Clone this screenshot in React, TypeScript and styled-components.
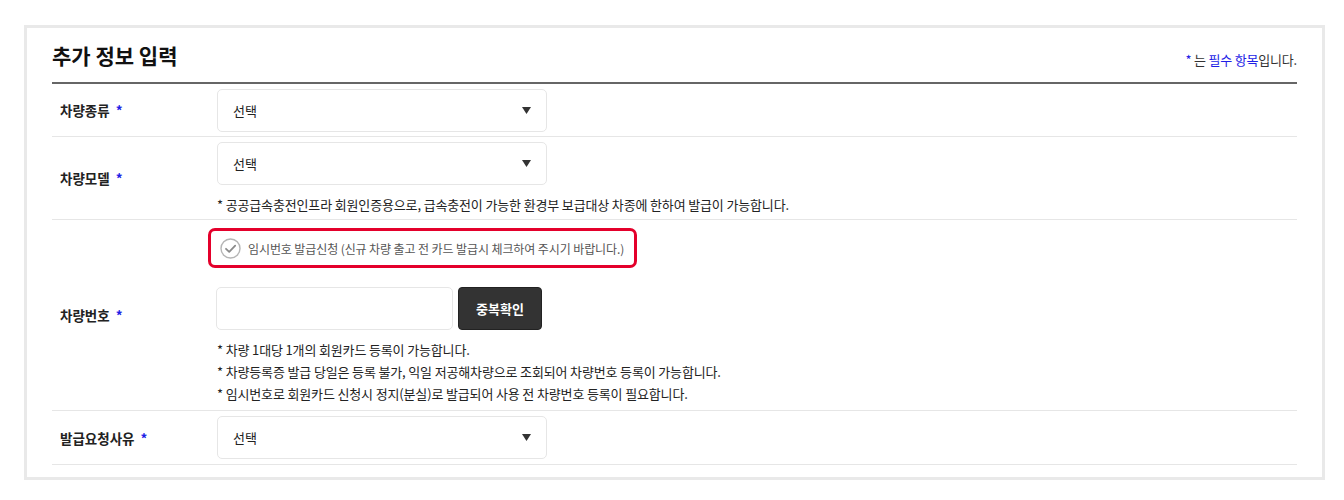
import React, { useState } from "react";
import styled, { createGlobalStyle } from "styled-components";

const GlobalStyle = createGlobalStyle`
  html, body {
    margin: 0;
    padding: 0;
    background: #fff;
  }
  body {
    font-family: "Noto Sans CJK KR", "Noto Sans", sans-serif;
    color: #222;
  }
`;

const Page = styled.div`
  padding: 25px 0 0 24px;
`;

const Panel = styled.section`
  width: 1245px;
  border: 3px solid #e9e9e9;
  padding: 0 25px 12px 25px;
`;

const Header = styled.div`
  display: flex;
  justify-content: space-between;
  align-items: flex-end;
  height: 56px;
  padding-bottom: 13px;
  box-sizing: border-box;
  border-bottom: 2px solid #666;
`;

const Title = styled.h2`
  margin: 0;
  font-size: 21px;
  line-height: 28px;
  font-weight: 700;
  color: #111;
`;

const Required = styled.p`
  margin: 0;
  font-size: 13px;
  line-height: 18px;
  color: #333;
  letter-spacing: -0.2px;
`;

const Blue = styled.span`
  color: #1e1ee6;
`;

const Row = styled.div`
  display: grid;
  grid-template-columns: 165px 1fr;
  align-items: center;
  border-bottom: 1px solid #e6e6e6;
`;

const Label = styled.div`
  padding-left: 8px;
  font-size: 13.5px;
  font-weight: 700;
  color: #222;
`;

const Star = styled.span`
  margin-left: 6px;
  color: #1e1ee6;
`;

const Cell = styled.div<{ $top?: number; $bottom?: number }>`
  padding: ${(p) => p.$top ?? 4}px 0 ${(p) => p.$bottom ?? 4}px;
`;

const SelectBox = styled.div`
  width: 330px;
  height: 43px;
  box-sizing: border-box;
  border: 1px solid #e6e6e6;
  border-radius: 5px;
  display: flex;
  align-items: center;
  justify-content: space-between;
  padding: 0 15px 0 15px;
  font-size: 13px;
  color: #222;
  cursor: pointer;
`;

const Notes = styled.ul<{ $gap?: number }>`
  list-style: none;
  margin: ${(p) => p.$gap ?? 9}px 0 0;
  padding: 0;
`;

const Note = styled.li`
  font-size: 13px;
  line-height: 22px;
  color: #222;
  letter-spacing: -0.15px;
`;

const CheckFrame = styled.label`
  display: inline-flex;
  align-items: center;
  gap: 7px;
  margin: 4px 0 0 -9px;
  height: 40px;
  box-sizing: border-box;
  padding: 0 10px 0 9px;
  border: 3px solid #e4002b;
  border-radius: 7px;
  font-size: 12px;
  letter-spacing: -0.1px;
  color: #555;
  cursor: pointer;
`;

const NumberLine = styled.div`
  display: flex;
  align-items: center;
  gap: 5px;
  margin-top: 19px;
`;

const TextInput = styled.input`
  width: 237px;
  height: 43px;
  box-sizing: border-box;
  border: 1px solid #e6e6e6;
  border-radius: 5px;
  padding: 0 12px;
  font-family: inherit;
  font-size: 13px;
  outline: none;
  margin-left: -1px;
`;

const DarkButton = styled.button`
  width: 84px;
  height: 43px;
  border: 1px solid #222;
  border-radius: 4px;
  background: #333;
  color: #fff;
  font-family: inherit;
  font-size: 13px;
  font-weight: 700;
  cursor: pointer;
`;

const Arrow = () => (
  <svg width="9" height="7" viewBox="0 0 9 7">
    <path d="M0 0h9L4.5 7z" fill="#333" />
  </svg>
);

const CircleCheck = ({ on }: { on: boolean }) => (
  <svg width="21" height="21" viewBox="0 0 21 21">
    <circle cx="10.5" cy="10.5" r="9.5" fill="#fff" stroke={on ? "#e4002b" : "#b5b5b5"} strokeWidth="1.4" />
    <path
      d="M6 10.8l3.2 3.1L15.2 7.6"
      fill="none"
      stroke={on ? "#e4002b" : "#8a8a8a"}
      strokeWidth="1.8"
      strokeLinecap="round"
      strokeLinejoin="round"
    />
  </svg>
);

const Select = ({ text = "선택" }: { text?: string }) => (
  <SelectBox>
    <span>{text}</span>
    <Arrow />
  </SelectBox>
);

const App = () => {
  const [temp, setTemp] = useState(false);
  const [carNo, setCarNo] = useState("");

  return (
    <>
      <GlobalStyle />
      <Page>
        <Panel>
          <Header>
            <Title>추가 정보 입력</Title>
            <Required>
              <Blue>*</Blue> 는 <Blue>필수 항목</Blue>입니다.
            </Required>
          </Header>

          <Row>
            <Label>
              차량종류<Star>*</Star>
            </Label>
            <Cell $top={5} $bottom={4}>
              <Select />
            </Cell>
          </Row>

          <Row>
            <Label>
              차량모델<Star>*</Star>
            </Label>
            <Cell $top={5} $bottom={3}>
              <Select />
              <Notes>
                <Note>
                  * 공공급속충전인프라 회원인증용으로, 급속충전이 가능한 환경부 보급대상 차종에 한하여 발급이 가능합니다.
                </Note>
              </Notes>
            </Cell>
          </Row>

          <Row>
            <Label>
              차량번호<Star>*</Star>
            </Label>
            <Cell $top={4} $bottom={5}>
              <CheckFrame onClick={() => setTemp(!temp)}>
                <CircleCheck on={temp} />
                임시번호 발급신청 (신규 차량 출고 전 카드 발급시 체크하여 주시기 바랍니다.)
              </CheckFrame>
              <NumberLine>
                <TextInput value={carNo} onChange={(e) => setCarNo(e.target.value)} />
                <DarkButton>중복확인</DarkButton>
              </NumberLine>
              <Notes>
                <Note>* 차량 1대당 1개의 회원카드 등록이 가능합니다.</Note>
                <Note>* 차량등록증 발급 당일은 등록 불가, 익일 저공해차량으로 조회되어 차량번호 등록이 가능합니다.</Note>
                <Note>* 임시번호로 회원카드 신청시 정지(분실)로 발급되어 사용 전 차량번호 등록이 필요합니다.</Note>
              </Notes>
            </Cell>
          </Row>

          <Row>
            <Label>
              발급요청사유<Star>*</Star>
            </Label>
            <Cell $top={5} $bottom={5}>
              <Select />
            </Cell>
          </Row>
        </Panel>
      </Page>
    </>
  );
};

export default App;
